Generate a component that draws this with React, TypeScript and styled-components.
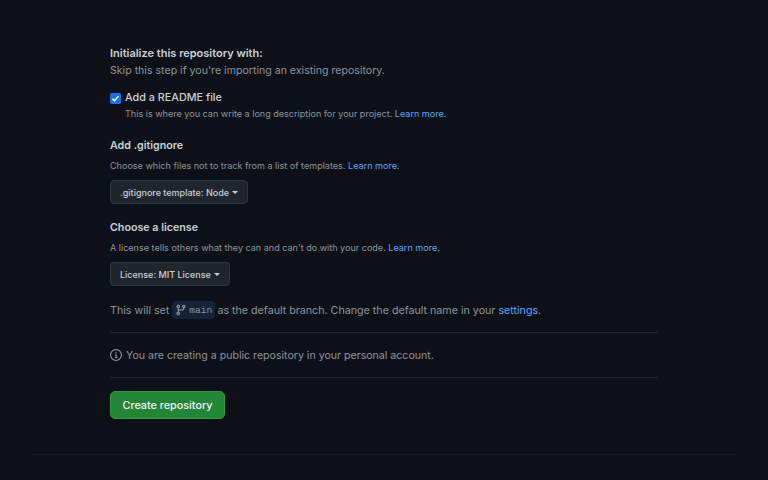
import React from 'react';
import styled, { createGlobalStyle } from 'styled-components';

const GlobalStyle = createGlobalStyle`
  html, body {
    margin: 0;
    padding: 0;
    height: 480px;
    overflow: hidden;
    background: #0d1117;
  }
  body {
    font-family: Inter, "Liberation Sans", sans-serif;
    color: #c9d1d9;
  }
`;

const Page = styled.div`
  width: 768px;
  height: 480px;
  padding: 45px 30px 0;
  box-sizing: border-box;
`;

const Form = styled.div`
  width: 548px;
  margin-left: 80px;
`;

const Heading = styled.div<{ $small?: boolean }>`
  font-size: ${(p) => (p.$small ? '10.7px' : '11px')};
  line-height: 16px;
  font-weight: 600;
  color: #c9d1d9;
`;

const Lead = styled.div`
  font-size: 10.6px;
  line-height: 16px;
  margin-top: 2px;
  color: #8b949e;
`;

const CheckRow = styled.div`
  display: flex;
  align-items: center;
  gap: 4px;
  margin-top: 11px;
  height: 16px;
`;

const CheckBox = styled.span`
  display: flex;
  align-items: center;
  justify-content: center;
  width: 11px;
  height: 11px;
  border-radius: 2px;
  background: #1f6feb;
`;

const CheckLabel = styled.span`
  font-size: 10.8px;
  line-height: 16px;
  font-weight: 500;
  color: #c9d1d9;
`;

const Note = styled.div<{ $indent?: boolean }>`
  font-size: 9.05px;
  line-height: 14px;
  color: #8b949e;
  margin-top: ${(p) => (p.$indent ? '1px' : '5px')};
  padding-bottom: ${(p) => (p.$indent ? '1px' : '0')};
  margin-left: ${(p) => (p.$indent ? '15px' : '0')};
`;

const Link = styled.a`
  color: #58a6ff;
  text-decoration: none;
`;

const Section = styled.div`
  margin-top: 16px;
`;

const Dropdown = styled.div`
  display: inline-flex;
  align-items: center;
  gap: 3px;
  height: 24px;
  box-sizing: border-box;
  margin-top: 7px;
  padding: 0 9px;
  font-size: 9px;
  font-weight: 500;
  color: #c9d1d9;
  background: #21262d;
  border: 1px solid #30363d;
  border-radius: 4px;
`;

const Caret = styled.span`
  width: 0;
  height: 0;
  border-style: solid;
  border-width: 3px 3px 0;
  border-color: #c9d1d9 transparent transparent;
`;

const BranchLine = styled.div`
  display: flex;
  align-items: center;
  margin-top: 14px;
  height: 20px;
  font-size: 10.7px;
  color: #8b949e;
  white-space: pre;
`;

const BranchPill = styled.span`
  display: inline-flex;
  align-items: center;
  gap: 2px;
  height: 18px;
  margin: 0 2px 0 3px;
  padding: 0 3px;
  border-radius: 4px;
  background: rgba(56, 139, 253, 0.15);
  font-family: "Liberation Mono", monospace;
  font-size: 9.6px;
  color: #8b949e;
`;

const Rule = styled.div`
  height: 1px;
  background: #21262d;
`;

const FirstRule = styled(Rule)`
  margin-top: 12px;
`;

const InfoRow = styled.div`
  display: flex;
  align-items: center;
  gap: 4px;
  height: 44px;
  font-size: 10.6px;
  color: #8b949e;
`;

const CreateButton = styled.button`
  display: block;
  width: 115px;
  height: 28px;
  margin-top: 13px;
  padding: 0;
  border: 1px solid #2b9a45;
  border-radius: 5px;
  background: #238636;
  color: #f0f6fc;
  font-family: inherit;
  font-size: 10.8px;
  font-weight: 500;
`;

const FooterRule = styled(Rule)`
  margin-top: 35px;
  background: #161b22;
`;

const BranchIcon = () => (
  <svg width="12" height="12" viewBox="0 0 16 16" fill="#8b949e">
    <path d="M9.5 3.25a2.25 2.25 0 1 1 3 2.122V6A2.5 2.5 0 0 1 10 8.5H6a1 1 0 0 0-1 1v1.128a2.251 2.251 0 1 1-1.5 0V5.372a2.25 2.25 0 1 1 1.5 0v1.836A2.493 2.493 0 0 1 6 7h4a1 1 0 0 0 1-1v-.628A2.25 2.25 0 0 1 9.5 3.25Zm-6 0a.75.75 0 1 0 1.5 0 .75.75 0 0 0-1.5 0Zm8.25-.75a.75.75 0 1 0 0 1.5.75.75 0 0 0 0-1.5ZM4.25 12a.75.75 0 1 0 0 1.5.75.75 0 0 0 0-1.5Z" />
  </svg>
);

const InfoIcon = () => (
  <svg width="12" height="12" viewBox="0 0 16 16" fill="#8b949e">
    <path d="M0 8a8 8 0 1 1 16 0A8 8 0 0 1 0 8Zm8-6.5a6.5 6.5 0 1 0 0 13 6.5 6.5 0 0 0 0-13ZM6.5 7.75A.75.75 0 0 1 7.25 7h1a.75.75 0 0 1 .75.75v2.75h.25a.75.75 0 0 1 0 1.5h-2a.75.75 0 0 1 0-1.5h.25v-2h-.25a.75.75 0 0 1-.75-.75ZM8 6a1 1 0 1 1 0-2 1 1 0 0 1 0 2Z" />
  </svg>
);

const App = () => {
  return (
    <Page>
      <GlobalStyle />
      <Form>
        <Heading>Initialize this repository with:</Heading>
        <Lead>Skip this step if you're importing an existing repository.</Lead>
        <CheckRow>
          <CheckBox>
            <svg width="9" height="9" viewBox="0 0 16 16" fill="none" stroke="#fff" strokeWidth="2.6">
              <path d="M2.5 8.5l3.5 3.5 7.5-8" />
            </svg>
          </CheckBox>
          <CheckLabel>Add a README file</CheckLabel>
        </CheckRow>
        <Note $indent>
          This is where you can write a long description for your project. <Link>Learn more.</Link>
        </Note>
        <Section>
          <Heading $small>Add .gitignore</Heading>
          <Note>
            Choose which files not to track from a list of templates. <Link>Learn more.</Link>
          </Note>
          <Dropdown>
            .gitignore template: Node <Caret />
          </Dropdown>
        </Section>
        <Section>
          <Heading $small>Choose a license</Heading>
          <Note>
            A license tells others what they can and can't do with your code. <Link>Learn more.</Link>
          </Note>
          <Dropdown>
            License: MIT License <Caret />
          </Dropdown>
        </Section>
        <BranchLine>
          This will set
          <BranchPill>
            <BranchIcon />
            main
          </BranchPill>
          as the default branch. Change the default name in your <Link>settings</Link>.
        </BranchLine>
        <FirstRule />
        <InfoRow>
          <InfoIcon />
          You are creating a public repository in your personal account.
        </InfoRow>
        <Rule />
        <CreateButton>Create repository</CreateButton>
      </Form>
      <FooterRule />
    </Page>
  );
};

export default App;
